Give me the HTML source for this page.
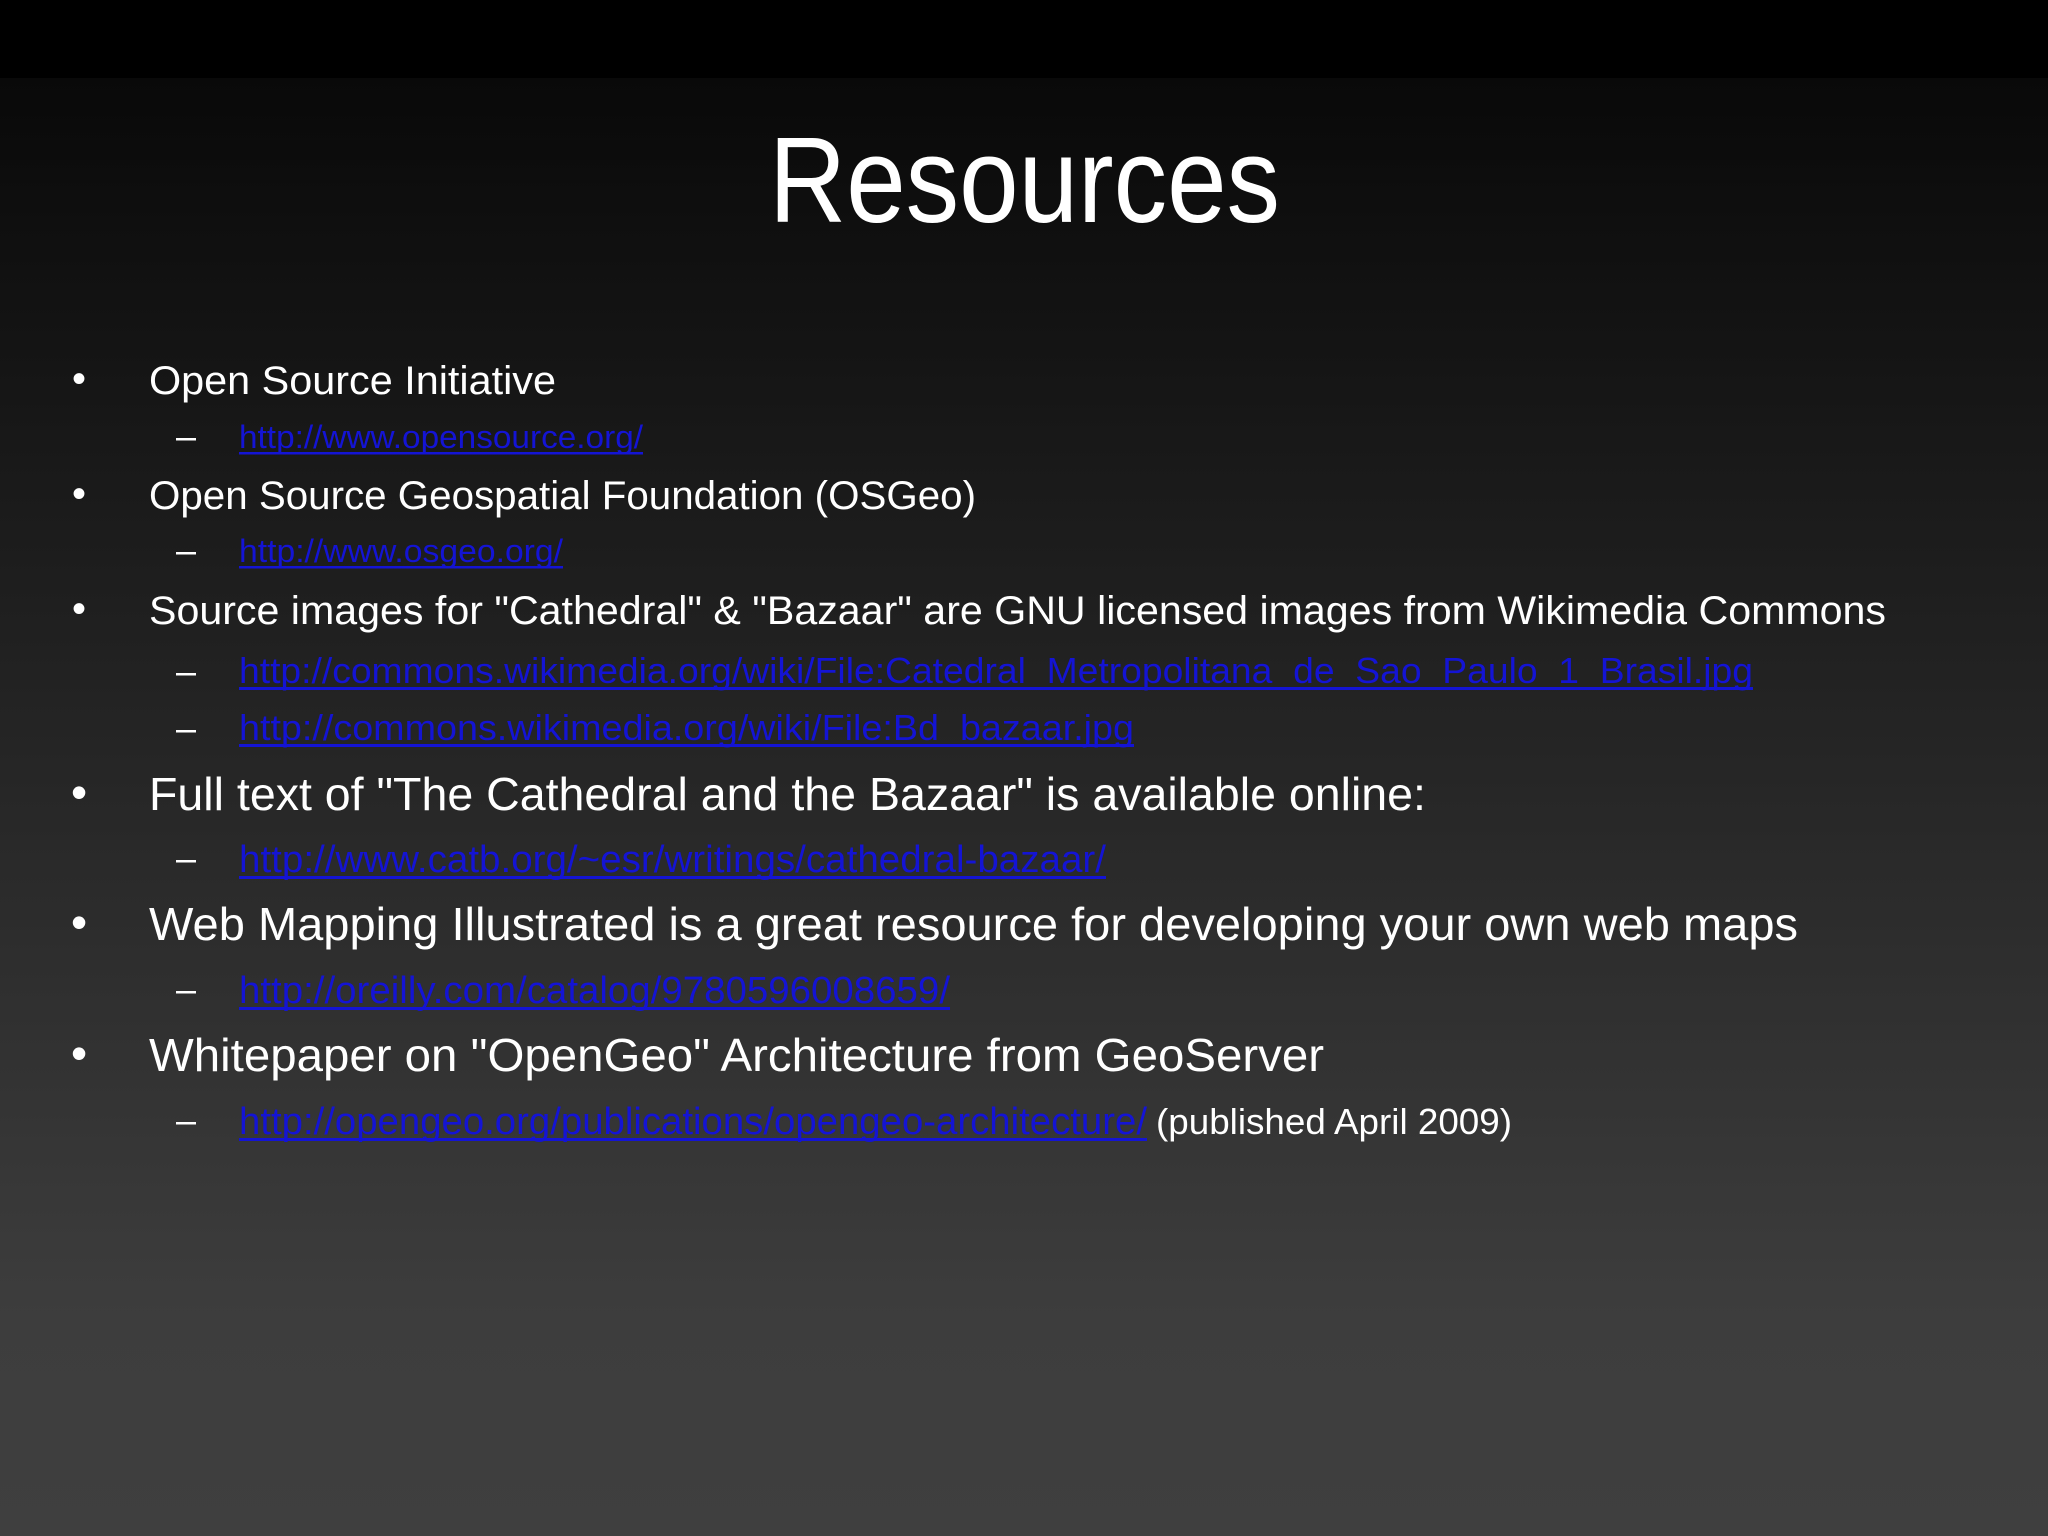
<!DOCTYPE html>
<html><head><meta charset="utf-8"><style>
html,body{margin:0;padding:0;width:2048px;height:1536px;overflow:hidden;background:#000}
svg{display:block}
text{font-family:"Liberation Sans",sans-serif}
.w{fill:#fff}
.l{fill:#1414d4}
</style></head><body>
<svg width="2048" height="1536" viewBox="0 0 2048 1536" xmlns="http://www.w3.org/2000/svg">
<defs><linearGradient id="g" x1="0" y1="0" x2="0" y2="1">
<stop offset="0" stop-color="#090909"/><stop offset="0.15" stop-color="#121212"/><stop offset="0.85" stop-color="#3d3d3d"/><stop offset="1" stop-color="#3f3f3f"/></linearGradient></defs>
<rect width="2048" height="1536" fill="#000"/>
<rect y="78" width="2048" height="1458" fill="url(#g)"/>
<text class="w" x="769" y="222" font-size="122" textLength="511" lengthAdjust="spacingAndGlyphs">Resources</text>

<g class="w" font-size="40">
<text x="72" y="392">•</text>
<text x="149" y="394" textLength="407" lengthAdjust="spacingAndGlyphs">Open Source Initiative</text>
<text x="72" y="507">•</text>
<text x="149" y="509" textLength="827" lengthAdjust="spacingAndGlyphs">Open Source Geospatial Foundation (OSGeo)</text>
<text x="72" y="622">•</text>
<text x="149" y="624" textLength="1737" lengthAdjust="spacingAndGlyphs">Source images for "Cathedral" &amp; "Bazaar" are GNU licensed images from Wikimedia Commons</text>
</g>
<g class="w" font-size="46">
<text x="71" y="808">•</text>
<text x="149" y="810" textLength="1277" lengthAdjust="spacingAndGlyphs">Full text of "The Cathedral and the Bazaar" is available online:</text>
<text x="71" y="938">•</text>
<text x="149" y="940" textLength="1649" lengthAdjust="spacingAndGlyphs">Web Mapping Illustrated is a great resource for developing your own web maps</text>
<text x="71" y="1069">•</text>
<text x="149" y="1071" textLength="1175" lengthAdjust="spacingAndGlyphs">Whitepaper on "OpenGeo" Architecture from GeoServer</text>
</g>

<g class="w" font-size="32">
<rect x="176" y="438" width="20" height="2.5"/>
<rect x="176" y="552" width="20" height="2.5"/>
<rect x="176" y="673" width="20" height="2.5"/>
<rect x="176" y="730" width="20" height="2.5"/>
<rect x="176" y="860" width="20" height="2.5"/>
<rect x="176" y="991" width="20" height="2.5"/>
<rect x="176" y="1122" width="20" height="2.5"/>
<text x="1156" y="1134" font-size="36" textLength="356" lengthAdjust="spacingAndGlyphs">(published April 2009)</text>
</g>

<g class="l">
<text x="239" y="448" font-size="32" textLength="404" lengthAdjust="spacingAndGlyphs">http://www.opensource.org/</text>
<rect x="239" y="452" width="404" height="2.5"/>
<text x="239" y="562" font-size="32" textLength="324" lengthAdjust="spacingAndGlyphs">http://www.osgeo.org/</text>
<rect x="239" y="566" width="324" height="2.5"/>
<text x="239" y="683" font-size="36" textLength="1514" lengthAdjust="spacingAndGlyphs">http://commons.wikimedia.org/wiki/File:Catedral_Metropolitana_de_Sao_Paulo_1_Brasil.jpg</text>
<rect x="239" y="687" width="1514" height="3"/>
<text x="239" y="740" font-size="36" textLength="895" lengthAdjust="spacingAndGlyphs">http://commons.wikimedia.org/wiki/File:Bd_bazaar.jpg</text>
<rect x="239" y="744" width="895" height="3"/>
<text x="239" y="872" font-size="38" textLength="867" lengthAdjust="spacingAndGlyphs">http://www.catb.org/~esr/writings/cathedral-bazaar/</text>
<rect x="239" y="876" width="867" height="3"/>
<text x="239" y="1003" font-size="38" textLength="711" lengthAdjust="spacingAndGlyphs">http://oreilly.com/catalog/9780596008659/</text>
<rect x="239" y="1007" width="711" height="3"/>
<text x="239" y="1134" font-size="38" textLength="908" lengthAdjust="spacingAndGlyphs">http://opengeo.org/publications/opengeo-architecture/</text>
<rect x="239" y="1138" width="908" height="3"/>
</g>
</svg>
</body></html>
